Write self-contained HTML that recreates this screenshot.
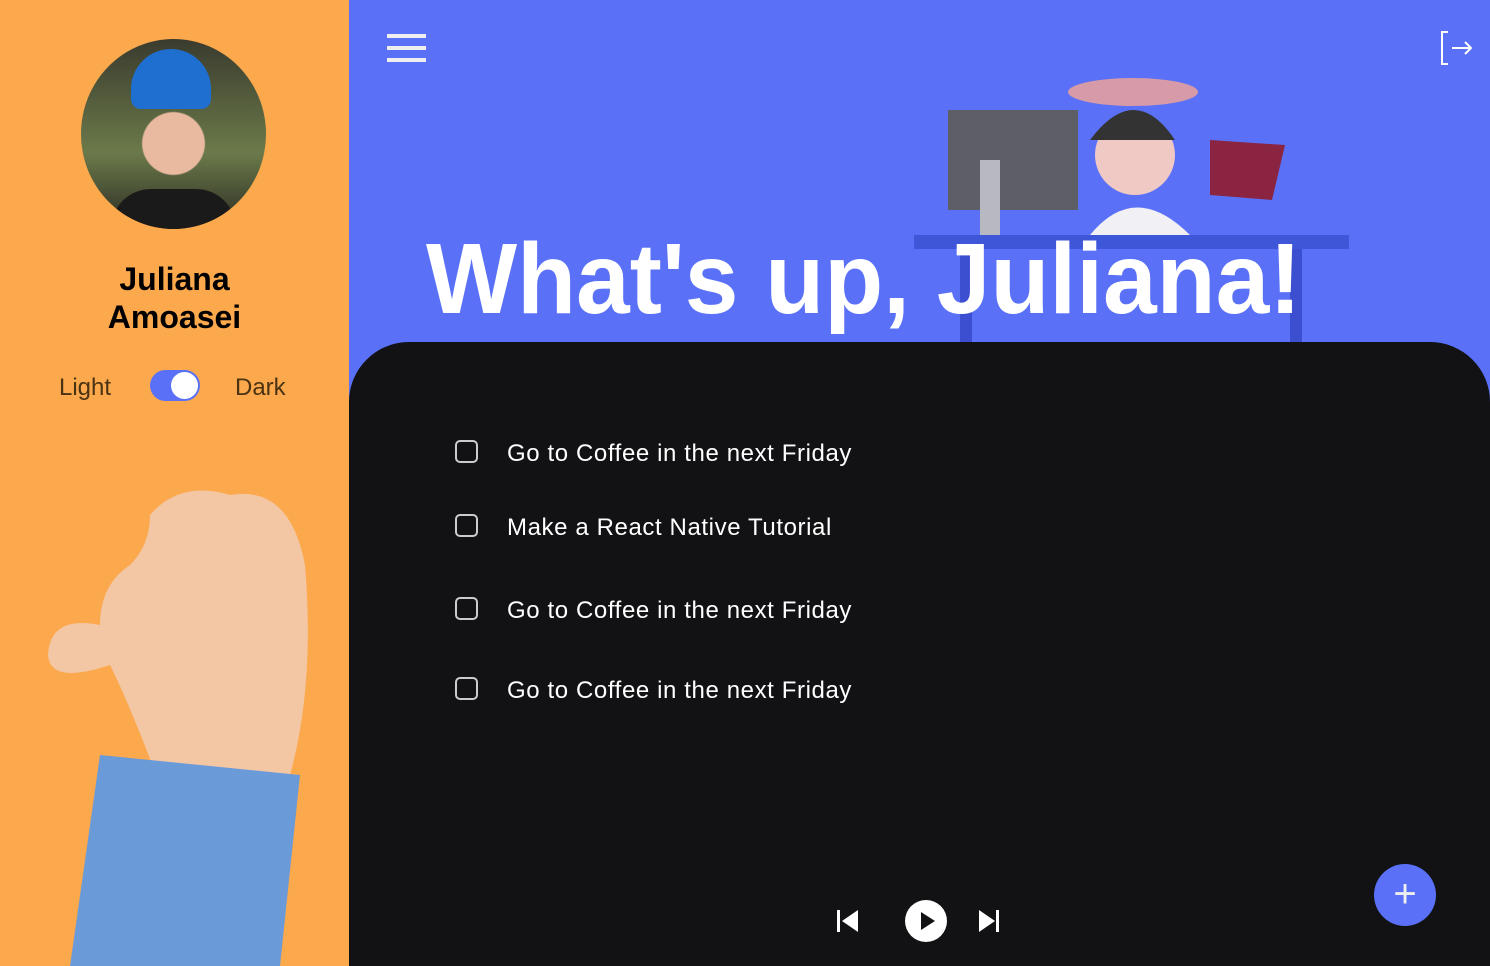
<!DOCTYPE html>
<html><head><meta charset="utf-8"><style>
*{margin:0;padding:0;box-sizing:border-box}
body{width:1490px;height:966px;overflow:hidden;font-family:"Liberation Sans",sans-serif;background:#5a71f7;position:relative}
.side{position:absolute;left:0;top:0;width:349px;height:966px;background:#fba94c;overflow:hidden}
.avatar{position:absolute;left:81px;top:39px;width:185px;height:190px;border-radius:50%;background:radial-gradient(circle at 50% 55%,#e9b9a0 0 22%,transparent 23%),linear-gradient(#3a3b2e,#6b7a4a 60%,#2a2a22);overflow:hidden}
.name{position:absolute;left:0;width:349px;top:260px;text-align:center;font-weight:bold;font-size:32px;line-height:38px;color:#000}
.tog{position:absolute;top:374px;font-size:24px;color:#4a3212}
.sw{position:absolute;left:150px;top:370px;width:50px;height:31px;border-radius:16px;background:#5a71f7}
.sw:after{content:"";position:absolute;right:2px;top:2px;width:27px;height:27px;border-radius:50%;background:#fff}
.main{position:absolute;left:349px;top:342px;width:1141px;height:624px;background:#121214;border-radius:60px 60px 0 0}
.title{position:absolute;left:426px;top:222px;font-size:100px;font-weight:bold;color:#fff;white-space:nowrap;transform:scaleX(.965);transform-origin:left}
.item{position:absolute;left:507px;font-size:24px;color:#fff;letter-spacing:.6px}
.cb{position:absolute;left:455px;width:23px;height:23px;border:2.5px solid #ccc;border-radius:5px}
.fab{position:absolute;left:1374px;top:864px;width:62px;height:62px;border-radius:50%;background:#5a71f7;color:#eee;font-size:40px;text-align:center;line-height:60px}
</style></head><body>
<div class="side">
<div class="avatar"><div style="position:absolute;left:50px;top:10px;width:80px;height:60px;background:#1f6fd0;border-radius:40px 40px 10px 10px"></div><div style="position:absolute;left:30px;top:150px;width:125px;height:60px;background:#1a1a1a;border-radius:40px 40px 0 0"></div></div>
<div class="name">Juliana<br>Amoasei</div>
<div class="tog" style="left:59px">Light</div>
<div class="sw"></div>
<div class="tog" style="left:235px">Dark</div>
<svg style="position:absolute;left:40px;top:485px" width="280" height="481">
<path d="M110 30 Q140 -5 190 10 Q250 0 265 80 Q275 200 250 290 L120 300 Q90 220 70 180 Q10 200 8 170 Q10 130 60 140 Q60 100 90 80 Q110 60 110 30Z" fill="#f3c6a4"/>
<path d="M60 270 L260 290 L240 481 L30 481 Z" fill="#6a9ad8"/>
</svg>
</div>
<svg style="position:absolute;left:387px;top:34px" width="40" height="30"><rect y="0" width="39" height="4" fill="#eee"/><rect y="12" width="39" height="4" fill="#eee"/><rect y="24" width="39" height="4" fill="#eee"/></svg>
<svg style="position:absolute;left:1438px;top:30px" width="36" height="36" fill="none" stroke="#fff" stroke-width="2"><path d="M10 2H4V34H10M14 18H33M27 12L33 18L27 24"/></svg>
<svg style="position:absolute;left:900px;top:30px" width="460" height="320">
<rect x="48" y="80" width="130" height="100" fill="#5d5e66"/>
<rect x="80" y="130" width="20" height="75" fill="#b8b8c0"/>
<circle cx="235" cy="125" r="40" fill="#f1c9c4"/><path d="M190 110 Q235 50 275 110Z" fill="#333"/>
<ellipse cx="233" cy="62" rx="65" ry="14" fill="#d69aa8"/>
<path d="M190 205 Q235 150 290 205Z" fill="#f0f0f5"/>
<path d="M310 110 L385 115 L372 170 L310 165Z" fill="#8b2440"/>
<rect x="14" y="205" width="435" height="14" fill="#3e56d8"/>
<rect x="60" y="219" width="12" height="100" fill="#3c4fd0"/><rect x="390" y="219" width="12" height="100" fill="#3c4fd0"/>
</svg>
<div class="title">What's up, Juliana!</div>
<div class="main"></div>
<div class="cb" style="top:440px"></div><div class="item" style="top:440px">Go to Coffee in the next Friday</div>
<div class="cb" style="top:514px"></div><div class="item" style="top:514px">Make a React Native Tutorial</div>
<div class="cb" style="top:597px"></div><div class="item" style="top:597px">Go to Coffee in the next Friday</div>
<div class="cb" style="top:677px"></div><div class="item" style="top:677px">Go to Coffee in the next Friday</div>
<svg style="position:absolute;left:830px;top:898px" width="180" height="46" fill="#fff">
<rect x="7" y="12" width="3" height="22"/><path d="M28 12V34L12 23Z"/>
<circle cx="96" cy="23" r="21"/><path d="M91 14V32L105 23Z" fill="#121214"/>
<path d="M149 12V34L165 23Z"/><rect x="166" y="12" width="3" height="22"/>
</svg>
<div class="fab">+</div>
</body></html>
